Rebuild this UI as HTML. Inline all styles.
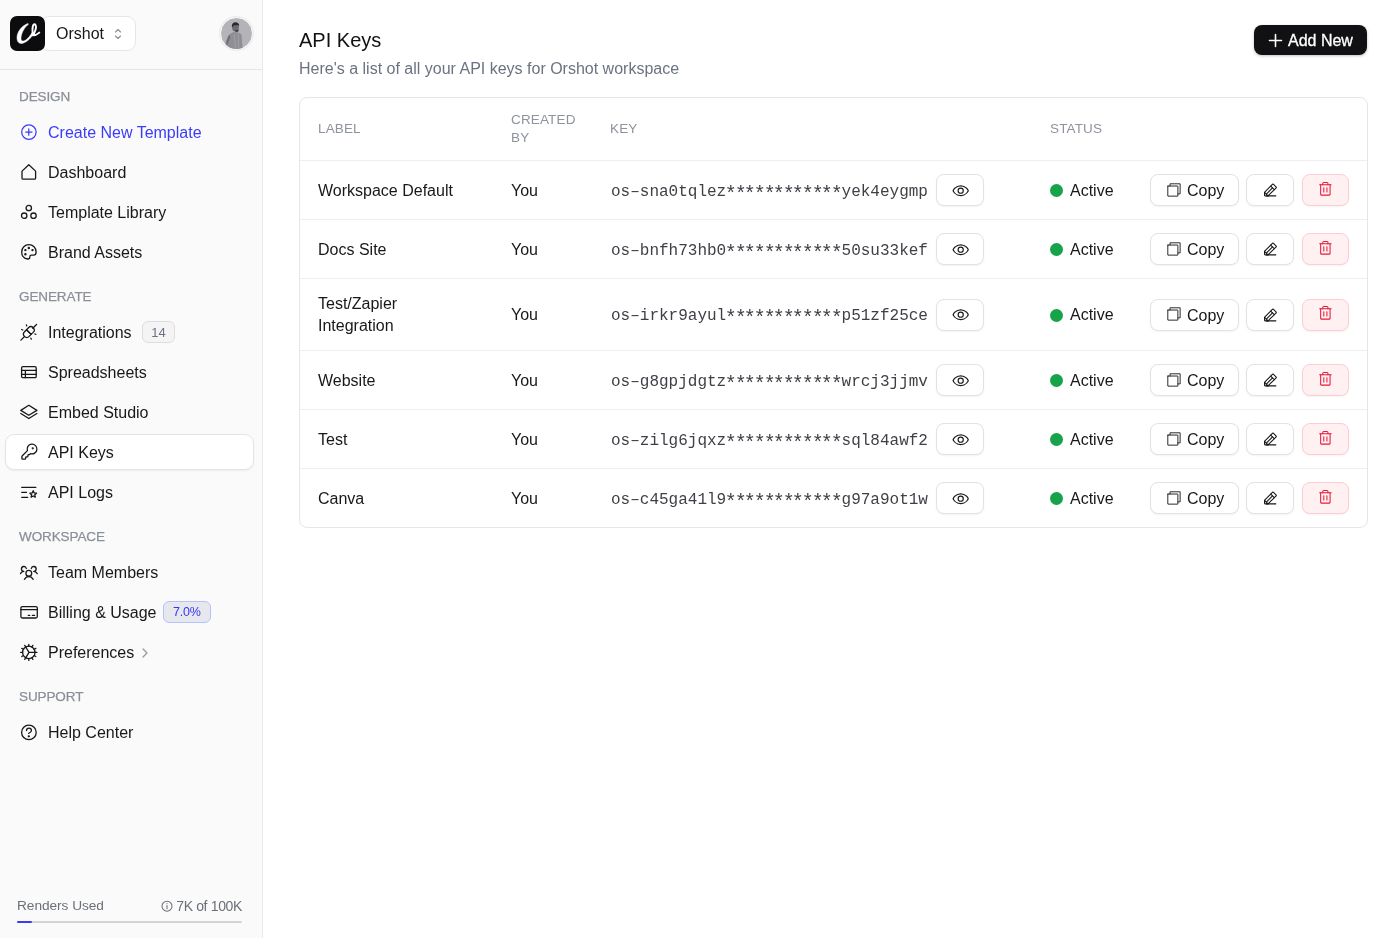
<!DOCTYPE html>
<html><head><meta charset="utf-8"><title>API Keys</title>
<style>
*{box-sizing:border-box;margin:0;padding:0}
html,body{width:1400px;height:938px;overflow:hidden;background:#fff;font-family:"Liberation Sans",sans-serif;color:#1c1c20}
svg{display:block}
.sb,.main{will-change:transform}
.sb{position:absolute;left:0;top:0;width:263px;height:938px;background:#fafafa;border-right:1px solid #e9eaee;box-shadow:1px 0 0 #f5f5f6}
.hdr{position:absolute;left:0;top:0;width:262px;height:70px;border-bottom:1px solid #e5e6ea}
.logo{position:absolute;left:10px;top:16px;width:35px;height:35px;background:#0c0c0e;border-radius:7px;z-index:2}
.logo svg{position:absolute;left:0;top:0}
.ws{position:absolute;left:40px;top:16px;width:95.5px;height:35px;background:#fff;border:1px solid #e6e6ea;border-radius:9px}
.ws span{position:absolute;left:15px;top:8px;font-size:16px;line-height:18px;color:#18181b}
.ws svg{position:absolute;left:72px;top:10px}
.avatar{position:absolute;left:220px;top:17px;width:33px;height:33px;border-radius:50%;background:#b4b4b8;border:1px solid #fff;box-shadow:0 0 0 1px #ececef;overflow:hidden}
.sec{position:absolute;left:19px;font-size:13.5px;line-height:16px;color:#8b8f98;letter-spacing:-0.1px;-webkit-text-stroke:0.25px #8b8f98}
.it{position:absolute;left:5px;width:249px;height:36px;border-radius:9px}
.it .ic{position:absolute;left:15px;top:9px}
.it .tx{position:absolute;left:43px;top:10px;font-size:16px;line-height:18px;color:#18181b;white-space:nowrap}
.it.act{background:#fff;border:1px solid #e3e4e8;box-shadow:0 1px 2px rgba(0,0,0,.06)}
.it.act .ic{left:14px;top:8px}
.it.act .tx{left:42px;top:9px}
.badge{position:absolute;top:7px;height:22px;border-radius:6px;font-size:13px;text-align:center;line-height:20px}
.main{position:absolute;left:263px;top:0;width:1137px;height:938px;background:#fff}
h1{position:absolute;left:36px;top:29px;font-size:20px;line-height:22px;font-weight:normal;color:#111}
.sub{position:absolute;left:36px;top:60px;font-size:16px;line-height:18px;color:#6b7280;white-space:nowrap}
.add{position:absolute;left:991px;top:25px;width:113px;height:30px;background:#111114;border-radius:8px;color:#fff;font-size:16px;box-shadow:0 1px 3px rgba(0,0,0,.25)}
.add svg{position:absolute;left:14px;top:7.5px}
.add span{position:absolute;left:34px;top:7px;line-height:18px;white-space:nowrap;-webkit-text-stroke:0.3px #fff}
.tbl{position:absolute;left:36px;top:97px;width:1069px;height:431px;border:1px solid #e4e6ea;border-radius:8px;overflow:hidden;background:#fff}
.row{position:absolute;left:0;width:1067px;border-top:1px solid #eceef1}
.th{position:absolute;font-size:13.5px;color:#8f939c;letter-spacing:0.15px;line-height:18px;white-space:nowrap}
.c{position:absolute;font-size:16px;line-height:22px;color:#18181b;white-space:nowrap}
.key{font-family:"Liberation Mono",monospace;color:#3f3f46}
.key i{font-style:normal;display:inline-block;transform:translateY(2.5px) scale(1.25)}
.btn{position:absolute;height:32px;background:#fff;border:1px solid #e2e2e6;border-radius:8px;box-shadow:0 1px 2px rgba(0,0,0,.05)}
.btn svg{position:absolute}
.btn span{position:absolute;font-size:16px;line-height:18px;color:#18181b}
.del{background:#fff1f2;border-color:#fecdd3}
.dot{position:absolute;width:13px;height:13px;border-radius:50%;background:#16a34a}
.foot{position:absolute;left:17px;top:898px;width:225px}
.foot .l{position:absolute;left:0;top:0;font-size:13.7px;letter-spacing:-0.05px;line-height:16px;color:#6b6f78;white-space:nowrap}
.foot .r{position:absolute;right:0;top:0;font-size:14px;letter-spacing:-0.35px;line-height:16px;color:#6b6f78;white-space:nowrap}
.foot .bar{position:absolute;left:0;top:22.5px;width:225px;height:2.6px;border-radius:2px;background:#d4d4d8}
.foot .fill{position:absolute;left:0;top:0;width:15px;height:2.6px;border-radius:2px;background:#3b3bf6}
</style></head><body>
<div class="sb">
  <div class="hdr">
    <div class="ws"><span>Orshot</span><svg width="10" height="14" viewBox="0 0 10 14" fill="none" stroke="#8a8a92" stroke-width="1.1" stroke-linecap="round" stroke-linejoin="round"><path d="M2.5 5L5 2.5 7.5 5M2.5 9L5 11.5 7.5 9"/></svg></div>
    <div class="logo"><svg width="35" height="35" viewBox="0 0 35 35" fill="none" stroke="#fff" stroke-linecap="round" stroke-linejoin="round"><path d="M17.8 7.6C12 9.5 6.8 16 7 22c.1 4 2 5.8 5 5.4 4-.6 8.5-4.9 11.3-9.2L22 16.8c-2.5 4.2-6.2 8-8.6 8.2-2 .2-2.6-1.2-2.4-3.2.5-5.3 3.8-10.8 7.2-13.2z" fill="#fff" stroke-width=".5"/><path d="M22.6 17.5c-.4-4.5.2-8.9 1.6-9.2 1.6-.3 2.2 2.5 1.4 5.3-.7 2.6-2 5-3 5.8 2.2 0 4.9-1.1 6.7-2.8" stroke-width="1.9"/></svg></div>
    <div class="avatar"><svg width="33" height="33" viewBox="0 0 33 33"><path d="M8.5 16.5c1.8-1.6 3.8-2.4 5.8-2.4 2.6 0 5 1 6.3 2.8l1 14.6H6.2l-1.6-5.2c.6-3.8 2-7.4 3.9-9.8z" fill="#8e8e94"/><path d="M8.5 16.5c-1.6 2.2-2.9 5.6-3.6 9.3l1.8.8c.6-2.6 1.5-5 2.6-7z" fill="#6e6e74"/><path d="M13.2 16l1.3 15M17.2 15.4l.4 15.6" stroke="#a4a4aa" stroke-width=".8"/><ellipse cx="14.5" cy="9.2" rx="3.4" ry="4.2" fill="#6a6a70"/><path d="M10.8 8.6c-.2-2.6 1.4-4.3 3.6-4.3 2.3 0 3.9 1.5 3.8 3.6l-1.6-.9c-.9.4-2.5.4-3.8.2l-1 1.8z" fill="#2a2a2f"/><path d="M14.2 12.2c1.3.3 2.6.1 3.6-.6l-.5 1.9c-1 .5-2.1.5-3 .1z" fill="#3a3a40"/></svg></div>
  </div>
  <div class="sec" style="top:89px">DESIGN</div><div class="it" style="top:114px"><div class="ic"><svg width="18" height="18" viewBox="0 0 18 18" fill="none" stroke="#3a3cf6" stroke-width="1.25" stroke-linecap="round"><circle cx="8.9" cy="9.1" r="7.2"/><path d="M8.8 5.9v6.3M5.7 9.1h6.3"/></svg></div><div class="tx" style="color:#3a3cf6">Create New Template</div></div><div class="it" style="top:154px"><div class="ic"><svg width="18" height="18" viewBox="0 0 18 18" fill="none" stroke="#18181b" stroke-width="1.3" stroke-linecap="round" stroke-linejoin="round"><path d="M2 15V8.6a1 1 0 0 1 .3-.7L8.8 1.8l6.5 6.1a1 1 0 0 1 .3.7V15a1.2 1.2 0 0 1-1.2 1.2H3.2A1.2 1.2 0 0 1 2 15z"/></svg></div><div class="tx">Dashboard</div></div><div class="it" style="top:194px"><div class="ic"><svg width="18" height="18" viewBox="0 0 18 18" fill="none" stroke="#18181b" stroke-width="1.3" stroke-linecap="round" stroke-linejoin="round"><circle cx="8.8" cy="5" r="2.7"/><circle cx="4.2" cy="12.7" r="2.7"/><circle cx="13.5" cy="12.7" r="2.7"/></svg></div><div class="tx">Template Library</div></div><div class="it" style="top:234px"><div class="ic"><svg width="18" height="18" viewBox="0 0 18 18" fill="none" stroke="#18181b" stroke-width="1.3" stroke-linecap="round" stroke-linejoin="round"><path d="M8 16C3.9 15.6 1.7 12.5 1.7 8.9 1.7 4.8 4.9 1.7 8.9 1.7c4.1 0 7.2 2.9 7.2 7.3 0 1.9-1.1 3.2-2.5 3.2h-2.2c-1 0-1.6.8-1.6 1.8 0 1.2-.8 2-1.8 2z"/><circle cx="5.4" cy="7.1" r=".55" fill="#18181b"/><circle cx="8.8" cy="5" r=".55" fill="#18181b"/><circle cx="12.5" cy="7.1" r=".55" fill="#18181b"/><circle cx="5.4" cy="11.3" r=".55" fill="#18181b"/></svg></div><div class="tx">Brand Assets</div></div><div class="sec" style="top:289px">GENERATE</div><div class="it" style="top:314px"><div class="ic"><svg width="18" height="18" viewBox="0 0 18 18" fill="none" stroke="#18181b" stroke-width="1.3" stroke-linecap="round" stroke-linejoin="round"><path d="M0.9 17.1l3.4-3.4M12.8 5.2l3.7-3.7"/><path d="M6.5 6.7l2-2a3.3 3.3 0 0 1 4.7 4.7l-2.1 2z"/><path d="M6.5 6.7l-2 2a3.3 3.3 0 0 0 4.7 4.7l1.9-2z"/><path d="M6.4 1.9l.3 1M1.7 6.5l1 .5M15.9 11.3l-1-.3M11.3 16.2l-.4-1"/></svg></div><div class="tx">Integrations</div><div class="badge" style="left:137px;width:33px;background:#f4f4f5;border:1px solid #dedee2;color:#6b7280;line-height:21px">14</div></div><div class="it" style="top:354px"><div class="ic"><svg width="18" height="18" viewBox="0 0 18 18" fill="none" stroke="#18181b" stroke-width="1.3" stroke-linecap="round" stroke-linejoin="round"><rect x="1.6" y="3.6" width="14.6" height="11.1" rx="1.3"/><path d="M1.6 7.3h14.6M1.6 11.3h14.6M5.4 7.3v7.4"/></svg></div><div class="tx">Spreadsheets</div></div><div class="it" style="top:394px"><div class="ic"><svg width="18" height="18" viewBox="0 0 18 18" fill="none" stroke="#18181b" stroke-width="1.3" stroke-linecap="round" stroke-linejoin="round"><path d="M8.8 2.3l8.1 5.1-8.1 4.9L0.8 7.4z"/><path d="M0.8 10.5l8 5 8.1-5"/></svg></div><div class="tx">Embed Studio</div></div><div class="it act" style="top:434px"><div class="ic"><svg width="18" height="18" viewBox="0 0 18 18" fill="none" stroke="#18181b" stroke-width="1.3" stroke-linecap="round" stroke-linejoin="round"><g transform="translate(.4 -.3) scale(.75)" stroke-width="1.75"><path d="M2.586 17.414A2 2 0 0 0 2 18.828V21a1 1 0 0 0 1 1h3a1 1 0 0 0 1-1v-1a1 1 0 0 1 1-1h1a1 1 0 0 0 1-1v-1a1 1 0 0 1 1-1h.172a2 2 0 0 0 1.414-.586l.814-.814a6.5 6.5 0 1 0-4-4z"/><circle cx="16.5" cy="7.5" r=".6" fill="#18181b"/></g></svg></div><div class="tx">API Keys</div></div><div class="it" style="top:474px"><div class="ic"><svg width="18" height="18" viewBox="0 0 18 18" fill="none" stroke="#18181b" stroke-width="1.3" stroke-linecap="round" stroke-linejoin="round"><path d="M1.8 4.4h14M1.8 9.4h4.7M1.8 14.4h5.9"/><path d="M13.2 7.7l1 2.2 2.3.3-1.7 1.6.5 2.4-2.1-1.2-2.1 1.2.5-2.4-1.7-1.6 2.3-.3z"/></svg></div><div class="tx">API Logs</div></div><div class="sec" style="top:529px">WORKSPACE</div><div class="it" style="top:554px"><div class="ic"><svg width="18" height="18" viewBox="0 0 18 18" fill="none" stroke="#18181b" stroke-width="1.3" stroke-linecap="round" stroke-linejoin="round"><circle cx="8.8" cy="10.3" r="2.9"/><path d="M4.4 16.3c1.1-1.8 2.6-2.8 4.4-2.8s3.3 1 4.4 2.8"/><path d="M6.3 5.5A2.45 2.45 0 1 0 3.8 8.4c-1.4 0-2.6.8-3.4 2.2"/><path d="M11.3 5.5a2.45 2.45 0 1 1 2.5 2.9c1.4 0 2.6.8 3.4 2.2"/></svg></div><div class="tx">Team Members</div></div><div class="it" style="top:594px"><div class="ic"><svg width="18" height="18" viewBox="0 0 18 18" fill="none" stroke="#18181b" stroke-width="1.3" stroke-linecap="round" stroke-linejoin="round"><rect x="0.9" y="3.6" width="16.4" height="11.4" rx="1.5"/><path d="M0.9 6.6h16.4M8.3 12.4h1.4M12.4 12.4h2.2"/></svg></div><div class="tx">Billing &amp; Usage</div><div class="badge" style="left:158px;width:47.5px;background:#e7e8ee;border:1.5px solid #b3c1ff;color:#3434f5;font-size:12.5px;line-height:21px;letter-spacing:-0.2px">7.0%</div></div><div class="it" style="top:634px"><div class="ic"><svg width="18" height="18" viewBox="0 0 18 18" fill="none" stroke="#18181b" stroke-width="1.3" stroke-linecap="round" stroke-linejoin="round"><circle cx="8.8" cy="9.4" r="6.2"/><path d="M8.8 1.3v1.9M8.8 15.6v1.9M.7 9.4h1.9M15 9.4h1.9M4.75 2.4l.95 1.65M11.9 14.75l.95 1.65M4.75 16.4l.95-1.65M11.9 4.05l.95-1.65M1.8 5.35l1.65.95M14.15 12.5l1.65.95M1.8 13.45l1.65-.95M14.15 6.3l1.65-.95"/><path d="M5.7 4l3.3 5.4-3.3 5.4M9 9.4h6"/></svg></div><div class="tx">Preferences</div><svg style="position:absolute;left:136px;top:13px" width="8" height="12" viewBox="0 0 8 12" fill="none" stroke="#9a9aa2" stroke-width="1.3" stroke-linecap="round" stroke-linejoin="round"><path d="M2 2l4 4-4 4"/></svg></div><div class="sec" style="top:689px">SUPPORT</div><div class="it" style="top:714px"><div class="ic"><svg width="18" height="18" viewBox="0 0 18 18" fill="none" stroke="#18181b" stroke-width="1.3" stroke-linecap="round" stroke-linejoin="round"><circle cx="8.9" cy="9.4" r="7.3"/><path d="M6.5 7.6a2.4 2.4 0 0 1 4.9.1c0 1.6-2 1.9-2.8 2.7"/><circle cx="8.8" cy="13.3" r=".5" fill="#18181b"/></svg></div><div class="tx">Help Center</div></div>
  <div class="foot">
    <div class="l">Renders Used</div>
    <div class="r">7K of 100K</div>
    <svg style="position:absolute;left:144px;top:2px" width="12" height="12" viewBox="0 0 12 12" fill="none" stroke="#6b6f78" stroke-width="1.05"><circle cx="6" cy="6.2" r="5"/><path d="M6 5.4v3.4M6 3.4v.3" stroke-linecap="round"/></svg>
    <div class="bar"><div class="fill"></div></div>
  </div>
</div>
<div class="main">
  <h1>API Keys</h1>
  <div class="sub">Here's a list of all your API keys for Orshot workspace</div>
  <div class="add"><svg width="15" height="15" viewBox="0 0 15 15" fill="none" stroke="#fff" stroke-width="1.6" stroke-linecap="round"><path d="M7.5 1.5v12M1.5 7.5h12"/></svg><span>Add New</span></div>
  <div class="tbl">
  <div class="th" style="left:18px;top:22px">LABEL</div><div class="th" style="left:211px;top:13px">CREATED<br>BY</div><div class="th" style="left:310px;top:22px">KEY</div><div class="th" style="left:750px;top:22px">STATUS</div><div class="row" style="top:62px;height:59px"><div class="c" style="left:18px;top:18.5px">Workspace Default</div><div class="c" style="left:211px;top:18.5px">You</div><div class="c key" style="left:311px;top:19.5px">os–sna0tqlez<i>*</i><i>*</i><i>*</i><i>*</i><i>*</i><i>*</i><i>*</i><i>*</i><i>*</i><i>*</i><i>*</i><i>*</i>yek4eygmp</div><div class="btn" style="left:636px;top:13.0px;width:48px"><svg style="left:14.6px;top:6.6px" width="18" height="18" viewBox="0 0 265 265" fill="none" stroke="#18181b" stroke-width="17" stroke-linecap="round" stroke-linejoin="round"><path d="M128,56C48,56,16,128,16,128s32,72,112,72,112-72,112-72S208,56,128,56Z"/><circle cx="128" cy="128" r="38"/></svg></div><div class="dot" style="left:750px;top:23.0px"></div><div class="c" style="left:770px;top:18.5px">Active</div><div class="btn" style="left:850px;top:13.0px;width:89px"><svg style="left:13.5px;top:5.6px" width="18" height="18" viewBox="0 0 257 257" fill="none" stroke="#27272a" stroke-width="14" stroke-linecap="round" stroke-linejoin="round"><polyline points="184 184 216 184 216 40 72 40 72 72"/><rect x="40" y="72" width="144" height="144" rx="2" stroke-linejoin="miter"/></svg><span style="left:36px;top:7px">Copy</span></div><div class="btn" style="left:946px;top:13.0px;width:48px"><svg style="left:14.8px;top:7.1px" width="18" height="18" viewBox="0 0 281 281" fill="none" stroke="#18181b" stroke-width="17" stroke-linecap="round" stroke-linejoin="round"><path d="M92.69,216H48a8,8,0,0,1-8-8V163.31a8,8,0,0,1,2.34-5.65L165.66,34.34a8,8,0,0,1,11.31,0L221.66,79a8,8,0,0,1,0,11.31Z"/><line x1="216" y1="216" x2="70" y2="216"/><line x1="136" y1="64" x2="192" y2="120"/><line x1="164" y1="92" x2="68" y2="188"/><line x1="95.49" y1="215.49" x2="40.51" y2="160.51"/></svg></div><div class="btn del" style="left:1002px;top:13.0px;width:47px"><svg style="left:14.3px;top:5.6px" width="16.6" height="16.6" viewBox="0 0 254 254" fill="none" stroke="#e5193a" stroke-width="16" stroke-linecap="round" stroke-linejoin="round"><line x1="216" y1="56" x2="40" y2="56"/><line x1="104" y1="104" x2="104" y2="168"/><line x1="152" y1="104" x2="152" y2="168"/><path d="M200,56V208a8,8,0,0,1-8,8H64a8,8,0,0,1-8-8V56"/><path d="M168,56V40a16,16,0,0,0-16-16H104A16,16,0,0,0,88,40V56"/></svg></div></div><div class="row" style="top:121px;height:59px"><div class="c" style="left:18px;top:18.5px">Docs Site</div><div class="c" style="left:211px;top:18.5px">You</div><div class="c key" style="left:311px;top:19.5px">os–bnfh73hb0<i>*</i><i>*</i><i>*</i><i>*</i><i>*</i><i>*</i><i>*</i><i>*</i><i>*</i><i>*</i><i>*</i><i>*</i>50su33kef</div><div class="btn" style="left:636px;top:13.0px;width:48px"><svg style="left:14.6px;top:6.6px" width="18" height="18" viewBox="0 0 265 265" fill="none" stroke="#18181b" stroke-width="17" stroke-linecap="round" stroke-linejoin="round"><path d="M128,56C48,56,16,128,16,128s32,72,112,72,112-72,112-72S208,56,128,56Z"/><circle cx="128" cy="128" r="38"/></svg></div><div class="dot" style="left:750px;top:23.0px"></div><div class="c" style="left:770px;top:18.5px">Active</div><div class="btn" style="left:850px;top:13.0px;width:89px"><svg style="left:13.5px;top:5.6px" width="18" height="18" viewBox="0 0 257 257" fill="none" stroke="#27272a" stroke-width="14" stroke-linecap="round" stroke-linejoin="round"><polyline points="184 184 216 184 216 40 72 40 72 72"/><rect x="40" y="72" width="144" height="144" rx="2" stroke-linejoin="miter"/></svg><span style="left:36px;top:7px">Copy</span></div><div class="btn" style="left:946px;top:13.0px;width:48px"><svg style="left:14.8px;top:7.1px" width="18" height="18" viewBox="0 0 281 281" fill="none" stroke="#18181b" stroke-width="17" stroke-linecap="round" stroke-linejoin="round"><path d="M92.69,216H48a8,8,0,0,1-8-8V163.31a8,8,0,0,1,2.34-5.65L165.66,34.34a8,8,0,0,1,11.31,0L221.66,79a8,8,0,0,1,0,11.31Z"/><line x1="216" y1="216" x2="70" y2="216"/><line x1="136" y1="64" x2="192" y2="120"/><line x1="164" y1="92" x2="68" y2="188"/><line x1="95.49" y1="215.49" x2="40.51" y2="160.51"/></svg></div><div class="btn del" style="left:1002px;top:13.0px;width:47px"><svg style="left:14.3px;top:5.6px" width="16.6" height="16.6" viewBox="0 0 254 254" fill="none" stroke="#e5193a" stroke-width="16" stroke-linecap="round" stroke-linejoin="round"><line x1="216" y1="56" x2="40" y2="56"/><line x1="104" y1="104" x2="104" y2="168"/><line x1="152" y1="104" x2="152" y2="168"/><path d="M200,56V208a8,8,0,0,1-8,8H64a8,8,0,0,1-8-8V56"/><path d="M168,56V40a16,16,0,0,0-16-16H104A16,16,0,0,0,88,40V56"/></svg></div></div><div class="row" style="top:180px;height:72px"><div class="c" style="left:18px;top:14.0px">Test/Zapier<br>Integration</div><div class="c" style="left:211px;top:25.0px">You</div><div class="c key" style="left:311px;top:26.0px">os–irkr9ayul<i>*</i><i>*</i><i>*</i><i>*</i><i>*</i><i>*</i><i>*</i><i>*</i><i>*</i><i>*</i><i>*</i><i>*</i>p51zf25ce</div><div class="btn" style="left:636px;top:19.5px;width:48px"><svg style="left:14.6px;top:6.6px" width="18" height="18" viewBox="0 0 265 265" fill="none" stroke="#18181b" stroke-width="17" stroke-linecap="round" stroke-linejoin="round"><path d="M128,56C48,56,16,128,16,128s32,72,112,72,112-72,112-72S208,56,128,56Z"/><circle cx="128" cy="128" r="38"/></svg></div><div class="dot" style="left:750px;top:29.5px"></div><div class="c" style="left:770px;top:25.0px">Active</div><div class="btn" style="left:850px;top:19.5px;width:89px"><svg style="left:13.5px;top:5.6px" width="18" height="18" viewBox="0 0 257 257" fill="none" stroke="#27272a" stroke-width="14" stroke-linecap="round" stroke-linejoin="round"><polyline points="184 184 216 184 216 40 72 40 72 72"/><rect x="40" y="72" width="144" height="144" rx="2" stroke-linejoin="miter"/></svg><span style="left:36px;top:7px">Copy</span></div><div class="btn" style="left:946px;top:19.5px;width:48px"><svg style="left:14.8px;top:7.1px" width="18" height="18" viewBox="0 0 281 281" fill="none" stroke="#18181b" stroke-width="17" stroke-linecap="round" stroke-linejoin="round"><path d="M92.69,216H48a8,8,0,0,1-8-8V163.31a8,8,0,0,1,2.34-5.65L165.66,34.34a8,8,0,0,1,11.31,0L221.66,79a8,8,0,0,1,0,11.31Z"/><line x1="216" y1="216" x2="70" y2="216"/><line x1="136" y1="64" x2="192" y2="120"/><line x1="164" y1="92" x2="68" y2="188"/><line x1="95.49" y1="215.49" x2="40.51" y2="160.51"/></svg></div><div class="btn del" style="left:1002px;top:19.5px;width:47px"><svg style="left:14.3px;top:5.6px" width="16.6" height="16.6" viewBox="0 0 254 254" fill="none" stroke="#e5193a" stroke-width="16" stroke-linecap="round" stroke-linejoin="round"><line x1="216" y1="56" x2="40" y2="56"/><line x1="104" y1="104" x2="104" y2="168"/><line x1="152" y1="104" x2="152" y2="168"/><path d="M200,56V208a8,8,0,0,1-8,8H64a8,8,0,0,1-8-8V56"/><path d="M168,56V40a16,16,0,0,0-16-16H104A16,16,0,0,0,88,40V56"/></svg></div></div><div class="row" style="top:252px;height:59px"><div class="c" style="left:18px;top:18.5px">Website</div><div class="c" style="left:211px;top:18.5px">You</div><div class="c key" style="left:311px;top:19.5px">os–g8gpjdgtz<i>*</i><i>*</i><i>*</i><i>*</i><i>*</i><i>*</i><i>*</i><i>*</i><i>*</i><i>*</i><i>*</i><i>*</i>wrcj3jjmv</div><div class="btn" style="left:636px;top:13.0px;width:48px"><svg style="left:14.6px;top:6.6px" width="18" height="18" viewBox="0 0 265 265" fill="none" stroke="#18181b" stroke-width="17" stroke-linecap="round" stroke-linejoin="round"><path d="M128,56C48,56,16,128,16,128s32,72,112,72,112-72,112-72S208,56,128,56Z"/><circle cx="128" cy="128" r="38"/></svg></div><div class="dot" style="left:750px;top:23.0px"></div><div class="c" style="left:770px;top:18.5px">Active</div><div class="btn" style="left:850px;top:13.0px;width:89px"><svg style="left:13.5px;top:5.6px" width="18" height="18" viewBox="0 0 257 257" fill="none" stroke="#27272a" stroke-width="14" stroke-linecap="round" stroke-linejoin="round"><polyline points="184 184 216 184 216 40 72 40 72 72"/><rect x="40" y="72" width="144" height="144" rx="2" stroke-linejoin="miter"/></svg><span style="left:36px;top:7px">Copy</span></div><div class="btn" style="left:946px;top:13.0px;width:48px"><svg style="left:14.8px;top:7.1px" width="18" height="18" viewBox="0 0 281 281" fill="none" stroke="#18181b" stroke-width="17" stroke-linecap="round" stroke-linejoin="round"><path d="M92.69,216H48a8,8,0,0,1-8-8V163.31a8,8,0,0,1,2.34-5.65L165.66,34.34a8,8,0,0,1,11.31,0L221.66,79a8,8,0,0,1,0,11.31Z"/><line x1="216" y1="216" x2="70" y2="216"/><line x1="136" y1="64" x2="192" y2="120"/><line x1="164" y1="92" x2="68" y2="188"/><line x1="95.49" y1="215.49" x2="40.51" y2="160.51"/></svg></div><div class="btn del" style="left:1002px;top:13.0px;width:47px"><svg style="left:14.3px;top:5.6px" width="16.6" height="16.6" viewBox="0 0 254 254" fill="none" stroke="#e5193a" stroke-width="16" stroke-linecap="round" stroke-linejoin="round"><line x1="216" y1="56" x2="40" y2="56"/><line x1="104" y1="104" x2="104" y2="168"/><line x1="152" y1="104" x2="152" y2="168"/><path d="M200,56V208a8,8,0,0,1-8,8H64a8,8,0,0,1-8-8V56"/><path d="M168,56V40a16,16,0,0,0-16-16H104A16,16,0,0,0,88,40V56"/></svg></div></div><div class="row" style="top:311px;height:59px"><div class="c" style="left:18px;top:18.5px">Test</div><div class="c" style="left:211px;top:18.5px">You</div><div class="c key" style="left:311px;top:19.5px">os–zilg6jqxz<i>*</i><i>*</i><i>*</i><i>*</i><i>*</i><i>*</i><i>*</i><i>*</i><i>*</i><i>*</i><i>*</i><i>*</i>sql84awf2</div><div class="btn" style="left:636px;top:13.0px;width:48px"><svg style="left:14.6px;top:6.6px" width="18" height="18" viewBox="0 0 265 265" fill="none" stroke="#18181b" stroke-width="17" stroke-linecap="round" stroke-linejoin="round"><path d="M128,56C48,56,16,128,16,128s32,72,112,72,112-72,112-72S208,56,128,56Z"/><circle cx="128" cy="128" r="38"/></svg></div><div class="dot" style="left:750px;top:23.0px"></div><div class="c" style="left:770px;top:18.5px">Active</div><div class="btn" style="left:850px;top:13.0px;width:89px"><svg style="left:13.5px;top:5.6px" width="18" height="18" viewBox="0 0 257 257" fill="none" stroke="#27272a" stroke-width="14" stroke-linecap="round" stroke-linejoin="round"><polyline points="184 184 216 184 216 40 72 40 72 72"/><rect x="40" y="72" width="144" height="144" rx="2" stroke-linejoin="miter"/></svg><span style="left:36px;top:7px">Copy</span></div><div class="btn" style="left:946px;top:13.0px;width:48px"><svg style="left:14.8px;top:7.1px" width="18" height="18" viewBox="0 0 281 281" fill="none" stroke="#18181b" stroke-width="17" stroke-linecap="round" stroke-linejoin="round"><path d="M92.69,216H48a8,8,0,0,1-8-8V163.31a8,8,0,0,1,2.34-5.65L165.66,34.34a8,8,0,0,1,11.31,0L221.66,79a8,8,0,0,1,0,11.31Z"/><line x1="216" y1="216" x2="70" y2="216"/><line x1="136" y1="64" x2="192" y2="120"/><line x1="164" y1="92" x2="68" y2="188"/><line x1="95.49" y1="215.49" x2="40.51" y2="160.51"/></svg></div><div class="btn del" style="left:1002px;top:13.0px;width:47px"><svg style="left:14.3px;top:5.6px" width="16.6" height="16.6" viewBox="0 0 254 254" fill="none" stroke="#e5193a" stroke-width="16" stroke-linecap="round" stroke-linejoin="round"><line x1="216" y1="56" x2="40" y2="56"/><line x1="104" y1="104" x2="104" y2="168"/><line x1="152" y1="104" x2="152" y2="168"/><path d="M200,56V208a8,8,0,0,1-8,8H64a8,8,0,0,1-8-8V56"/><path d="M168,56V40a16,16,0,0,0-16-16H104A16,16,0,0,0,88,40V56"/></svg></div></div><div class="row" style="top:370px;height:59px"><div class="c" style="left:18px;top:18.5px">Canva</div><div class="c" style="left:211px;top:18.5px">You</div><div class="c key" style="left:311px;top:19.5px">os–c45ga41l9<i>*</i><i>*</i><i>*</i><i>*</i><i>*</i><i>*</i><i>*</i><i>*</i><i>*</i><i>*</i><i>*</i><i>*</i>g97a9ot1w</div><div class="btn" style="left:636px;top:13.0px;width:48px"><svg style="left:14.6px;top:6.6px" width="18" height="18" viewBox="0 0 265 265" fill="none" stroke="#18181b" stroke-width="17" stroke-linecap="round" stroke-linejoin="round"><path d="M128,56C48,56,16,128,16,128s32,72,112,72,112-72,112-72S208,56,128,56Z"/><circle cx="128" cy="128" r="38"/></svg></div><div class="dot" style="left:750px;top:23.0px"></div><div class="c" style="left:770px;top:18.5px">Active</div><div class="btn" style="left:850px;top:13.0px;width:89px"><svg style="left:13.5px;top:5.6px" width="18" height="18" viewBox="0 0 257 257" fill="none" stroke="#27272a" stroke-width="14" stroke-linecap="round" stroke-linejoin="round"><polyline points="184 184 216 184 216 40 72 40 72 72"/><rect x="40" y="72" width="144" height="144" rx="2" stroke-linejoin="miter"/></svg><span style="left:36px;top:7px">Copy</span></div><div class="btn" style="left:946px;top:13.0px;width:48px"><svg style="left:14.8px;top:7.1px" width="18" height="18" viewBox="0 0 281 281" fill="none" stroke="#18181b" stroke-width="17" stroke-linecap="round" stroke-linejoin="round"><path d="M92.69,216H48a8,8,0,0,1-8-8V163.31a8,8,0,0,1,2.34-5.65L165.66,34.34a8,8,0,0,1,11.31,0L221.66,79a8,8,0,0,1,0,11.31Z"/><line x1="216" y1="216" x2="70" y2="216"/><line x1="136" y1="64" x2="192" y2="120"/><line x1="164" y1="92" x2="68" y2="188"/><line x1="95.49" y1="215.49" x2="40.51" y2="160.51"/></svg></div><div class="btn del" style="left:1002px;top:13.0px;width:47px"><svg style="left:14.3px;top:5.6px" width="16.6" height="16.6" viewBox="0 0 254 254" fill="none" stroke="#e5193a" stroke-width="16" stroke-linecap="round" stroke-linejoin="round"><line x1="216" y1="56" x2="40" y2="56"/><line x1="104" y1="104" x2="104" y2="168"/><line x1="152" y1="104" x2="152" y2="168"/><path d="M200,56V208a8,8,0,0,1-8,8H64a8,8,0,0,1-8-8V56"/><path d="M168,56V40a16,16,0,0,0-16-16H104A16,16,0,0,0,88,40V56"/></svg></div></div>
  </div>
</div>
</body></html>
